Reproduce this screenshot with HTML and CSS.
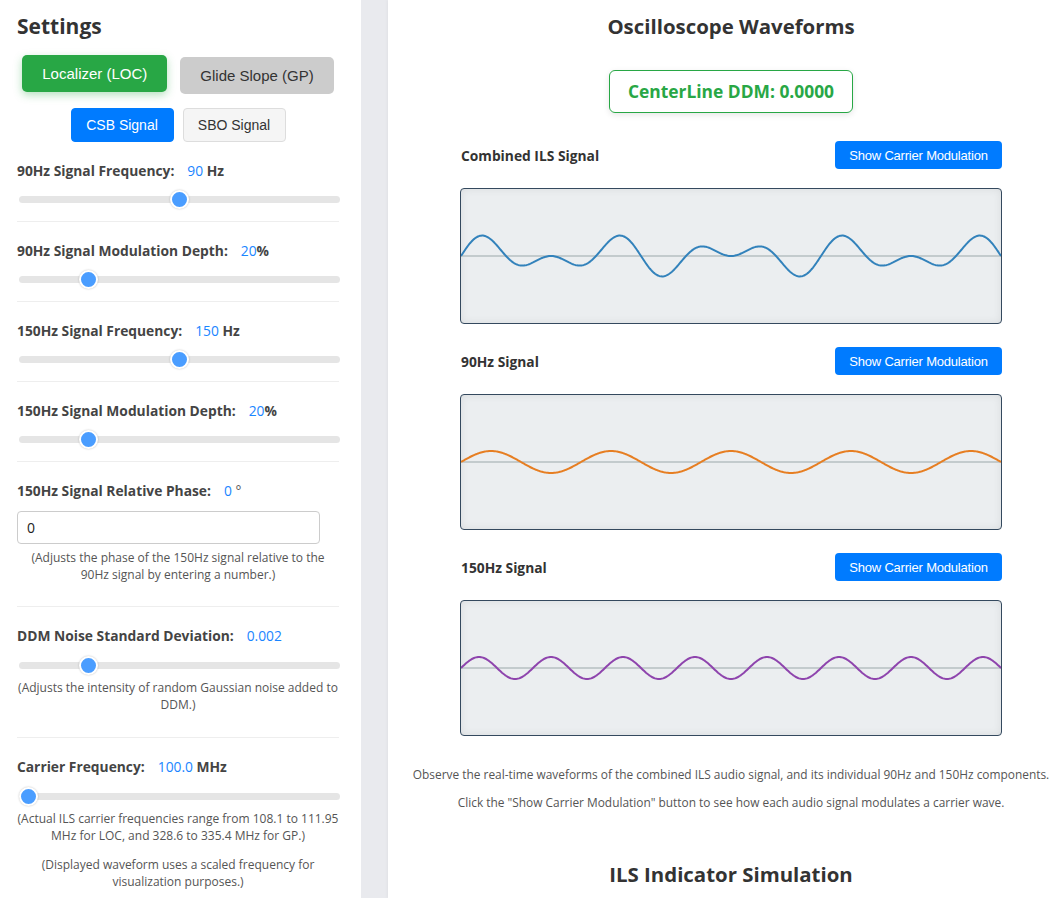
FILE: index.html
```html
<!DOCTYPE html>
<html lang="en">
<head>
<meta charset="utf-8">
<title>ILS Signal Simulator</title>
<link rel="stylesheet" href="styles.css">
</head>
<body>
<div class="app">
  <aside class="sidebar">
    <h2 class="sidebar-title">Settings</h2>
    <div class="mode-row">
      <button class="mode-btn mode-loc">Localizer (LOC)</button>
      <button class="mode-btn mode-gp">Glide Slope (GP)</button>
    </div>
    <div class="signal-row">
      <button class="sig-btn sig-active">CSB Signal</button>
      <button class="sig-btn">SBO Signal</button>
    </div>

    <div class="control">
      <div class="control-label"><span class="label-text">90Hz Signal Frequency:</span><span class="value">90</span><span class="unit">&nbsp;Hz</span></div>
      <input type="range" class="slider" min="60" max="120" value="90">
    </div>

    <div class="control">
      <div class="control-label"><span class="label-text">90Hz Signal Modulation Depth:</span><span class="value">20</span><span class="unit">%</span></div>
      <input type="range" class="slider" min="0" max="100" value="20">
    </div>

    <div class="control">
      <div class="control-label"><span class="label-text">150Hz Signal Frequency:</span><span class="value">150</span><span class="unit">&nbsp;Hz</span></div>
      <input type="range" class="slider" min="120" max="180" value="150">
    </div>

    <div class="control">
      <div class="control-label"><span class="label-text">150Hz Signal Modulation Depth:</span><span class="value">20</span><span class="unit">%</span></div>
      <input type="range" class="slider" min="0" max="100" value="20">
    </div>

    <div class="control control-notes">
      <div class="control-label"><span class="label-text">150Hz Signal Relative Phase:</span><span class="value">0</span><span class="unit unit-light">&nbsp;°</span></div>
      <input type="text" class="num-input" value="0">
      <p class="hint hint-narrow">(Adjusts the phase of the 150Hz signal relative to the 90Hz signal by entering a number.)</p>
    </div>

    <div class="control control-notes control-ddm">
      <div class="control-label"><span class="label-text">DDM Noise Standard Deviation:</span><span class="value">0.002</span></div>
      <input type="range" class="slider" min="0" max="0.01" step="0.001" value="0.002">
      <p class="hint hint-tight">(Adjusts the intensity of random Gaussian noise added to DDM.)</p>
    </div>

    <div class="control control-last">
      <div class="control-label"><span class="label-text">Carrier Frequency:</span><span class="value">100.0</span><span class="unit">&nbsp;MHz</span></div>
      <input type="range" class="slider" min="100" max="400" value="100">
      <p class="hint hint-tight">(Actual ILS carrier frequencies range from 108.1 to 111.95 MHz for LOC, and 328.6 to 335.4 MHz for GP.)</p>
      <p class="hint hint-second">(Displayed waveform uses a scaled frequency for visualization purposes.)</p>
    </div>
  </aside>

  <main class="main">
    <h2 class="main-title">Oscilloscope Waveforms</h2>
    <div class="ddm-wrap"><div class="ddm-box">CenterLine DDM: 0.0000</div></div>

    <section class="scope">
      <div class="scope-head">
        <h3 class="scope-title">Combined ILS Signal</h3>
        <button class="carrier-btn">Show Carrier Modulation</button>
      </div>
      <div class="screen">
        <svg class="scope-svg" viewBox="0 0 540 134" width="540" height="134">
          <line class="midline" x1="0" y1="67" x2="540" y2="67"></line>
          <polyline class="trace trace-combined" data-wave="combined" points=""></polyline>
        </svg>
      </div>
    </section>

    <section class="scope">
      <div class="scope-head">
        <h3 class="scope-title">90Hz Signal</h3>
        <button class="carrier-btn">Show Carrier Modulation</button>
      </div>
      <div class="screen">
        <svg class="scope-svg" viewBox="0 0 540 134" width="540" height="134">
          <line class="midline" x1="0" y1="67" x2="540" y2="67"></line>
          <polyline class="trace trace-90" data-wave="90" points=""></polyline>
        </svg>
      </div>
    </section>

    <section class="scope">
      <div class="scope-head">
        <h3 class="scope-title">150Hz Signal</h3>
        <button class="carrier-btn">Show Carrier Modulation</button>
      </div>
      <div class="screen">
        <svg class="scope-svg" viewBox="0 0 540 134" width="540" height="134">
          <line class="midline" x1="0" y1="67" x2="540" y2="67"></line>
          <polyline class="trace trace-150" data-wave="150" points=""></polyline>
        </svg>
      </div>
    </section>

    <p class="desc desc-first">Observe the real-time waveforms of the combined ILS audio signal, and its individual 90Hz and 150Hz components.</p>
    <p class="desc">Click the "Show Carrier Modulation" button to see how each audio signal modulates a carrier wave.</p>

    <h2 class="main-title section-title">ILS Indicator Simulation</h2>
  </main>
</div>
<script src="script.js"></script>
</body>
</html>
```

FILE: styles.css
```css
* { box-sizing: border-box; }

html, body {
  margin: 0;
  padding: 0;
  overflow: hidden;
}

body {
  background: #e9eaee;
  font-family: "Open Sans", "Noto Sans", sans-serif;
  color: #333;
}

.app {
  display: flex;
  align-items: flex-start;
  gap: 27px;
  height: 898px;
}

/* ---------- Sidebar ---------- */
.sidebar {
  width: 361px;
  flex: none;
  height: 898px;
  background: #fff;
  padding: 0 22px 0 17px;
}

.sidebar-title {
  margin: 0;
  padding-top: 11px;
  font-size: 21px;
  line-height: 30px;
  font-weight: 700;
  color: #333;
}

.mode-row {
  display: flex;
  justify-content: center;
  align-items: flex-start;
  gap: 13px;
  margin-top: 14px;
  height: 39px;
}

.mode-btn {
  font-family: "Liberation Sans", Arial, sans-serif;
  font-size: 15px;
  line-height: 17px;
  padding: 10px 20px;
  border: none;
  border-radius: 5px;
  cursor: pointer;
}

.mode-loc {
  background: #28a745;
  color: #fff;
  box-shadow: 0 3px 8px rgba(40, 167, 69, 0.35);
}

.mode-gp {
  background: #cccccc;
  color: #333;
  margin-top: 2px;
}

.signal-row {
  display: flex;
  justify-content: center;
  gap: 9px;
  margin-top: 14px;
}

.sig-btn {
  width: 103px;
  height: 34px;
  font-family: "Liberation Sans", Arial, sans-serif;
  font-size: 14px;
  border-radius: 4px;
  border: 1px solid #dddddd;
  background: #f5f5f5;
  color: #333;
  padding: 0;
}

.sig-active {
  background: #007bff;
  border-color: #007bff;
  color: #fff;
}

.control {
  padding: 19px 0 13px;
  border-bottom: 1px solid #eeeeee;
}

.control-label {
  font-size: 13.8px;
  line-height: 20px;
  height: 20px;
  color: #444;
  white-space: nowrap;
}

.label-text {
  font-weight: 700;
  margin-right: 13px;
}

.value {
  color: #1a85ff;
}

.unit {
  font-weight: 700;
  color: #444;
}

.unit-light {
  font-weight: 400;
  color: #555;
}

.slider {
  -webkit-appearance: none;
  appearance: none;
  display: block;
  width: 321px;
  height: 18px;
  margin: 9px 0 0 2px;
  background: transparent;
}

.slider::-webkit-slider-runnable-track {
  height: 7px;
  background: #e5e5e5;
  border-radius: 4px;
}

.slider::-webkit-slider-thumb {
  -webkit-appearance: none;
  appearance: none;
  width: 19px;
  height: 19px;
  margin-top: -6px;
  border-radius: 50%;
  background: #4a9dff;
  border: 2px solid #fff;
  box-shadow: 0 0 2px rgba(0, 0, 0, 0.25);
}

.control-ddm .slider,
.control-last .slider {
  margin-top: 10px;
}

.num-input {
  display: block;
  width: 303px;
  height: 33px;
  margin-top: 10px;
  padding: 0 9px;
  border: 1px solid #cccccc;
  border-radius: 4px;
  font-family: "Open Sans", "Noto Sans", sans-serif;
  font-size: 14px;
  color: #222;
}

.hint {
  margin: 5px -2px 10px;
  font-size: 12px;
  line-height: 17px;
  color: #555;
  text-align: center;
}

.hint-narrow {
  margin-left: 0;
  margin-right: 0;
  padding: 0 12px;
}

.hint-tight {
  margin-top: 5px;
}

.control-ddm .hint {
  margin-bottom: 11px;
}

.control-last .hint-tight {
  margin-bottom: 0;
}

.hint-second {
  margin-top: 12px;
}

.control-last {
  border-bottom: none;
}

/* ---------- Main ---------- */
.main {
  flex: 1;
  min-width: 0;
  height: 898px;
  background: #fff;
  padding: 11px 0 0 24px;
  box-shadow: -1px 0 3px rgba(0, 0, 0, 0.04);
}

.main-title {
  margin: 0;
  font-size: 20.4px;
  line-height: 30px;
  font-weight: 700;
  color: #333;
  text-align: center;
}

.ddm-wrap {
  display: flex;
  justify-content: center;
  margin-top: 29px;
}

.ddm-box {
  padding: 10px 18px;
  border: 1px solid #28a745;
  border-radius: 6px;
  font-size: 17.4px;
  line-height: 21px;
  font-weight: 700;
  color: #28a745;
  box-shadow: 0 2px 6px rgba(0, 0, 0, 0.1);
}

.scope {
  width: 542px;
  margin: 28px auto 0;
}

.scope + .scope {
  margin-top: 23px;
}

.scope-head {
  display: flex;
  justify-content: space-between;
  align-items: center;
  height: 28px;
}

.scope-title {
  margin: 0 0 0 1px;
  font-size: 13.8px;
  font-weight: 700;
  color: #333;
}

.carrier-btn {
  width: 167px;
  height: 28px;
  padding: 0;
  border: none;
  border-radius: 4px;
  background: #007bff;
  color: #fff;
  font-family: "Liberation Sans", Arial, sans-serif;
  font-size: 13px;
  letter-spacing: -0.2px;
}

.screen {
  margin-top: 19px;
  height: 136px;
  border: 1px solid #34495e;
  border-radius: 4px;
  background: #ebeef0;
  box-shadow: inset 0 0 8px rgba(0, 0, 0, 0.08);
  overflow: hidden;
}

.scope-svg {
  display: block;
}

.midline {
  stroke: #c3cbcd;
  stroke-width: 2;
}

.trace {
  fill: none;
  stroke-width: 2;
  stroke-linejoin: round;
}

.trace-combined { stroke: #3282bb; }
.trace-90 { stroke: #e67e22; }
.trace-150 { stroke: #8e44ad; }

.desc {
  margin: 10px 0 0;
  font-size: 11.9px;
  line-height: 18px;
  color: #555;
  text-align: center;
  white-space: nowrap;
}

.desc-first {
  margin-top: 29px;
}

.section-title {
  margin-top: 48px;
}
```

FILE: script.js
```js
(function () {
  var W = 540, H = 134, A = 11;
  var C90 = 4.5, C150 = 7.5;
  var lines = document.querySelectorAll('polyline[data-wave]');
  lines.forEach(function (pl) {
    var type = pl.getAttribute('data-wave');
    var pts = [];
    for (var x = 0; x <= W; x += 1) {
      var t = x / W;
      var s90 = Math.sin(2 * Math.PI * C90 * t);
      var s150 = Math.sin(2 * Math.PI * C150 * t);
      var v;
      if (type === 'combined') v = A * (s90 + s150);
      else if (type === '90') v = A * s90;
      else v = A * s150;
      pts.push(x + ',' + (H / 2 - v).toFixed(2));
    }
    pl.setAttribute('points', pts.join(' '));
  });
})();
```
